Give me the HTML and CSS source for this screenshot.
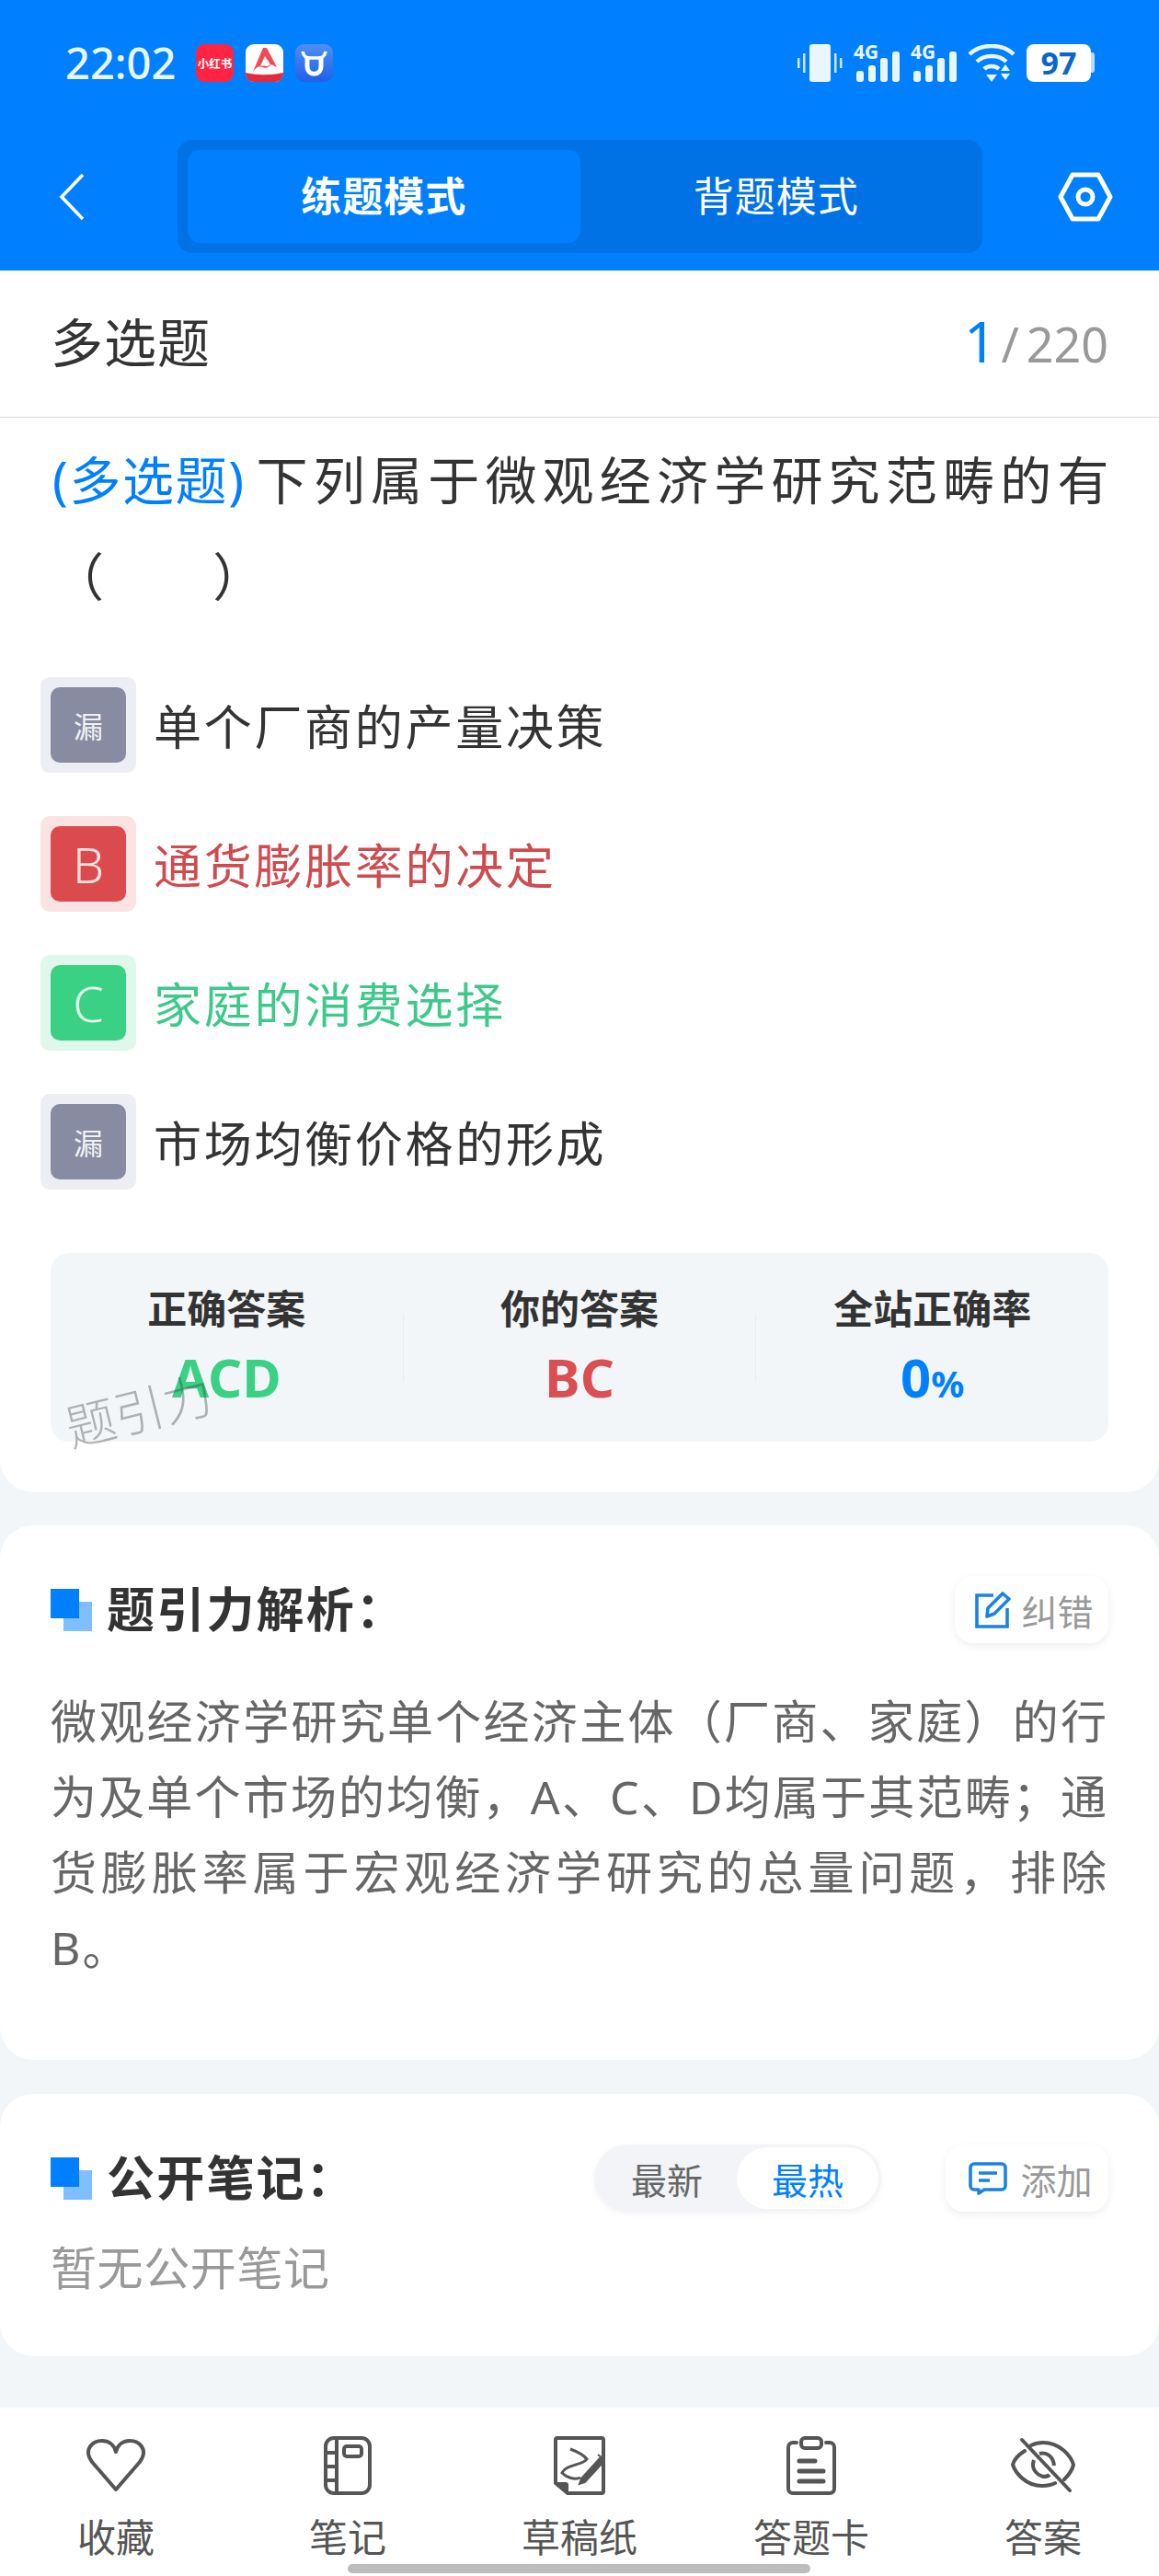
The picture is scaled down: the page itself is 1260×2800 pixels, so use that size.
FILE: index.html
```html
<!DOCTYPE html>
<html lang="zh-CN">
<head>
    <meta charset="UTF-8">
    <meta name="viewport" content="width=device-width, initial-scale=1.0">
    <title>练题模式</title>
    <link rel="stylesheet" href="styles.css">
</head>
<body>
<div class="page">
    <header class="top">
        <div class="status">
            <span class="time">22:02</span>
            <svg class="app" width="41" height="41" viewBox="0 0 41 41"><rect width="41" height="41" rx="9" fill="#ff2442"/><text x="20.5" y="26" font-size="12.5" font-weight="700" fill="#fff" text-anchor="middle">小红书</text></svg>
            <svg class="app" width="41" height="41" viewBox="0 0 41 41"><rect width="41" height="41" rx="9" fill="#fff"/><path d="M19 4h4l11 21-6-3c-3 3-6 5-10 3-4-2-7 1-10 5z" fill="#ef4a55"/><path d="M21 13l-5 11c3-1 6 0 8 0l3-2z" fill="#fff"/><path d="M0 31c14 3 27 3 41 0v1c0 5-4 9-9 9H9c-5 0-9-4-9-9z" fill="#e02c3c"/></svg>
            <svg class="app" width="41" height="41" viewBox="0 0 41 41"><defs><linearGradient id="blueApp" x1="0" y1="0" x2="0" y2="1"><stop offset="0" stop-color="#4d90f5"/><stop offset="1" stop-color="#1f60e8"/></linearGradient></defs><rect width="41" height="41" rx="9" fill="url(#blueApp)"/><path d="M13 13v11c0 11 15 11 15 0V13" fill="none" stroke="#fff" stroke-width="5"/><path d="M8 8c1 5 3 7 8 7h9c5 0 7-2 8-7" fill="none" stroke="#fff" stroke-width="3.5"/></svg>
            <div class="status-right">
                <svg width="49" height="41" viewBox="0 0 49 41"><rect x="13" width="23" height="41" rx="3" fill="#eaf6ff"/><rect x="6" y="10" width="2.5" height="21" fill="#cfe8ff"/><rect x="0" y="15" width="2.5" height="11" fill="#cfe8ff"/><rect x="40" y="10" width="2.5" height="21" fill="#cfe8ff"/><rect x="46" y="15" width="2.5" height="11" fill="#cfe8ff"/></svg>
                <svg width="50" height="41" viewBox="0 0 50 41" overflow="visible"><text x="0" y="16" font-size="22" font-weight="700" fill="#eaf6ff" textLength="27" lengthAdjust="spacingAndGlyphs">4G</text><rect x="3" y="29" width="8" height="12" rx="3" fill="#eaf6ff"/><rect x="16" y="23" width="8" height="18" rx="3" fill="#eaf6ff"/><rect x="29" y="15" width="8" height="26" rx="3" fill="#eaf6ff"/><rect x="42" y="8" width="8" height="33" rx="3" fill="#eaf6ff"/></svg>
                <svg width="50" height="41" viewBox="0 0 50 41" overflow="visible"><text x="0" y="16" font-size="22" font-weight="700" fill="#eaf6ff" textLength="27" lengthAdjust="spacingAndGlyphs">4G</text><rect x="3" y="29" width="8" height="12" rx="3" fill="#eaf6ff"/><rect x="16" y="23" width="8" height="18" rx="3" fill="#eaf6ff"/><rect x="29" y="15" width="8" height="26" rx="3" fill="#eaf6ff"/><rect x="42" y="8" width="8" height="33" rx="3" fill="#eaf6ff"/></svg>
                <svg width="52" height="41" viewBox="0 0 52 41"><path d="M2 11C14 -1 38 -1 50 11M10 19C18 11 34 11 42 19M18 27C22 23 30 23 34 27" fill="none" stroke="#eaf6ff" stroke-width="4.5"/><path d="M20 33h12l-6 8zM41 22l5 7H36zM36 32h10l-5 7z" fill="#eaf6ff"/></svg>
                <div class="battery"><span class="battery-num">97</span><span class="battery-cap"></span></div>
            </div>
        </div>
        <nav class="nav">
            <svg class="back" width="28" height="52" viewBox="0 0 28 52"><path d="M26 2L3 26l23 24" fill="none" stroke="#fff" stroke-width="3.6"/></svg>
            <div class="tabs">
                <div class="tab active">练题模式</div>
                <div class="tab">背题模式</div>
            </div>
            <svg class="gear" width="60" height="54" viewBox="0 0 60 54"><path d="M16 3h28l13 24-13 24H16L3 27z" fill="none" stroke="#fff" stroke-width="5" stroke-linejoin="round"/><circle cx="30" cy="27" r="8" fill="none" stroke="#fff" stroke-width="5"/></svg>
        </nav>
    </header>

    <section class="card question">
        <div class="q-head">
            <span class="q-type">多选题</span>
            <span class="q-count"><b>1</b><i>/</i>220</span>
        </div>
        <p class="q-text"><span class="q-tag">(多选题)</span>下列属于微观经济学研究范畴的有<br><span class="q-paren">（<span class="q-blank">　　</span>）</span></p>

        <ul class="options">
            <li class="option missed"><span class="opt-box"><span class="opt-key small">漏</span></span>单个厂商的产量决策</li>
            <li class="option wrong"><span class="opt-box"><span class="opt-key">B</span></span>通货膨胀率的决定</li>
            <li class="option right"><span class="opt-box"><span class="opt-key">C</span></span>家庭的消费选择</li>
            <li class="option missed"><span class="opt-box"><span class="opt-key small">漏</span></span>市场均衡价格的形成</li>
        </ul>

        <div class="stats">
            <div class="stat"><div class="stat-label">正确答案</div><div class="stat-value green">ACD</div></div>
            <span class="stat-line"></span>
            <div class="stat"><div class="stat-label">你的答案</div><div class="stat-value red">BC</div></div>
            <span class="stat-line"></span>
            <div class="stat"><div class="stat-label">全站正确率</div><div class="stat-value blue">0<small>%</small></div></div>
            <span class="watermark">题引力</span>
        </div>
    </section>

    <section class="card analysis">
        <div class="sec-head">
            <span class="squares"></span>
            <h2>题引力解析：</h2>
            <button class="mini-btn">
                <svg width="40" height="40" viewBox="0 0 40 40"><path d="M20 4H2v34h33V18" fill="none" stroke="#1a82e6" stroke-width="3.6"/><path d="M13 27l1-9L30 2l7 6-16 16z" fill="none" stroke="#1a82e6" stroke-width="3.6" stroke-linejoin="round"/></svg>
                纠错
            </button>
        </div>
        <p class="analysis-text">微观经济学研究单个经济主体（厂商、家庭）的行为及单个市场的均衡，A、C、D均属于其范畴；通货膨胀率属于宏观经济学研究的总量问题，排除B。</p>
    </section>

    <section class="card notes">
        <div class="sec-head">
            <span class="squares"></span>
            <h2>公开笔记：</h2>
            <div class="sort"><span>最新</span><span class="sort-on">最热</span></div>
            <button class="mini-btn add">
                <svg width="42" height="36" viewBox="0 0 42 36"><path d="M6 2h30a4 4 0 0 1 4 4v20a4 4 0 0 1-4 4H17l-6 4v-4H6a4 4 0 0 1-4-4V6a4 4 0 0 1 4-4z" fill="none" stroke="#1a82e6" stroke-width="3.6" stroke-linejoin="round"/><path d="M11 12h20M11 20h12" stroke="#1a82e6" stroke-width="3.6"/></svg>
                添加
            </button>
        </div>
        <p class="no-notes">暂无公开笔记</p>
    </section>

    <footer class="bottom">
        <div class="bar-item">
            <svg width="66" height="58" viewBox="0 0 66 58"><path d="M33 55L7 25C-3 11 8 2 18 2c7 0 13 4 15 12C35 6 41 2 48 2c10 0 21 9 11 23z" fill="none" stroke="#555" stroke-width="4" stroke-linejoin="round"/></svg>
            <span>收藏</span>
        </div>
        <div class="bar-item">
            <svg width="52" height="64" viewBox="0 0 52 64"><rect x="2" y="2" width="48" height="60" rx="9" fill="none" stroke="#555" stroke-width="4"/><path d="M14 2v60M2 18h12M2 33h12M2 48h12" stroke="#555" stroke-width="4"/><rect x="22" y="11" width="19" height="11" rx="3" fill="none" stroke="#555" stroke-width="4"/></svg>
            <span>笔记</span>
        </div>
        <div class="bar-item">
            <svg width="56" height="64" viewBox="0 0 56 64"><path d="M15 62H52a2 2 0 0 0 2-2V4a2 2 0 0 0-2-2H4a2 2 0 0 0-2 2v47z" fill="none" stroke="#555" stroke-width="4" stroke-linejoin="round"/><path d="M2 50h11a3 3 0 0 1 3 3v9z" fill="#555"/><path d="M18 14c8 3 15 7 18 11-5 7-22 5-27 15 5 5 14 8 20 5" fill="none" stroke="#555" stroke-width="3"/><path d="M30 46l-2 6 6-2 20-22-4-4zM48 20l5 4" fill="#555" stroke="#555" stroke-width="2"/></svg>
            <span>草稿纸</span>
        </div>
        <div class="bar-item">
            <svg width="56" height="64" viewBox="0 0 56 64"><path d="M12 7H8a5 5 0 0 0-5 5v45a5 5 0 0 0 5 5h40a5 5 0 0 0 5-5V12a5 5 0 0 0-5-5h-4" fill="none" stroke="#555" stroke-width="4" stroke-linecap="round"/><rect x="17" y="2" width="22" height="11" rx="4" fill="none" stroke="#555" stroke-width="4"/><path d="M15 27h17M15 38h26M15 49h26" stroke="#555" stroke-width="5" stroke-linecap="round"/></svg>
            <span>答题卡</span>
        </div>
        <div class="bar-item">
            <svg width="70" height="58" viewBox="0 0 70 58"><path d="M15 13C7 18 3 24 2 28c3 9 14 23 32 23 6 0 10-1 14-3M22 7c4-2 8-3 13-3 18 0 30 14 33 24-1 5-5 11-10 16" fill="none" stroke="#555" stroke-width="4" stroke-linecap="round"/><path d="M12 1l52 55" stroke="#555" stroke-width="4" stroke-linecap="round"/><path d="M25 23c-3 8 1 15 10 18 3 0 5 0 7-2M31 16c8-2 15 3 16 13" fill="none" stroke="#555" stroke-width="4"/></svg>
            <span>答案</span>
        </div>
        <div class="home-bar"></div>
    </footer>
</div>
</body>
</html>
```

FILE: styles.css
```css
* {
    box-sizing: border-box;
}
body {
    margin: 0;
    font-family: "Noto Sans", "Noto Sans CJK SC", sans-serif;
    color: #333;
}
.page {
    width: 1260px;
    height: 2800px;
    background-color: #f2f6f9;
    display: flex;
    flex-direction: column;
    overflow: hidden;
}

/* top */
.top {
    height: 294px;
    background-color: #0080ff;
}
.status {
    height: 136px;
    padding: 0 70px 0 71px;
    display: flex;
    align-items: center;
}
.time {
    font-size: 47px;
    font-weight: 500;
    color: #eaf6ff;
    margin-right: 22px;
}
.app {
    margin-right: 13px;
}
.status-right {
    margin-left: auto;
    display: flex;
    align-items: center;
    gap: 12px;
}
.battery {
    display: flex;
    align-items: center;
}
.battery-num {
    width: 70px;
    height: 41px;
    background-color: #fff;
    border-radius: 8px;
    text-align: center;
    font-size: 34px;
    line-height: 41px;
    font-weight: 700;
    color: #0a66c8;
}
.battery-cap {
    width: 4px;
    height: 22px;
    border-radius: 0 3px 3px 0;
    background-color: #bcdcff;
}
.nav {
    margin-top: 16px;
    height: 123px;
    display: grid;
    grid-template-columns: 193px 875px 1fr;
    align-items: center;
}
.back {
    margin-left: 64px;
}
.tabs {
    height: 123px;
    padding: 11px;
    background-color: #0072e5;
    border-radius: 16px;
    display: flex;
}
.tab {
    flex: 1;
    border-radius: 14px;
    padding-bottom: 5px;
    font-size: 44px;
    letter-spacing: 1px;
    color: #fff;
    display: flex;
    align-items: center;
    justify-content: center;
}
.tab.active {
    background-color: #0080ff;
    font-weight: 700;
}
.gear {
    justify-self: end;
    margin-right: 50px;
}

/* cards */
.card {
    background-color: #fff;
    border-radius: 36px;
}
.question {
    height: 1328px;
    border-radius: 0 0 36px 36px;
    padding-bottom: 54px;
}
.q-head {
    height: 160px;
    padding: 0 55px 8px 55px;
    border-bottom: 1px solid #d9d9d9;
    display: flex;
    align-items: center;
    justify-content: space-between;
}
.q-type {
    font-size: 57px;
    letter-spacing: 1px;
}
.q-count {
    font-size: 52px;
    color: #999;
}
.q-count b {
    font-size: 62px;
    font-weight: 400;
    color: #0080ff;
}
.q-count i {
    font-style: normal;
    margin: 0 8px 0 5px;
}
.q-text {
    margin: 16px 0 0;
    padding: 0 40px 0 57px;
    font-size: 56px;
    line-height: 103px;
    letter-spacing: 6.2px;
}
.q-tag {
    color: #0080ff;
    letter-spacing: 1.6px;
    margin-right: 12px;
}
.q-paren {
    display: block;
    margin-top: 2px;
}
.q-blank {
    letter-spacing: 0;
}
.options {
    list-style: none;
    margin: 34px 0 0;
    padding: 0 0 0 44px;
}
.option {
    height: 151px;
    display: flex;
    align-items: center;
    font-size: 52px;
    letter-spacing: 2.7px;
}
.opt-box {
    width: 104px;
    height: 104px;
    margin-right: 19px;
    padding: 11px;
    border-radius: 10px;
}
.opt-key {
    display: flex;
    width: 82px;
    height: 82px;
    border-radius: 10px;
    align-items: center;
    justify-content: center;
    font-size: 54px;
    font-weight: 300;
    letter-spacing: 0;
}
.opt-key.small {
    font-size: 32px;
    font-weight: 400;
}
.missed .opt-box {
    background-color: #eceef3;
}
.missed .opt-key {
    background-color: #878ca2;
    color: #f1f2f6;
}
.wrong {
    color: #cf4b4f;
}
.wrong .opt-box {
    background-color: #fbe3e3;
}
.wrong .opt-key {
    background-color: #db4b4d;
    color: #fbe3e3;
}
.right {
    color: #3dc98a;
}
.right .opt-box {
    background-color: #dff8eb;
}
.right .opt-key {
    background-color: #3ad184;
    color: #dff8eb;
}

/* stats */
.stats {
    position: relative;
    margin: 46px 55px 0;
    height: 205px;
    background-color: #f2f6f9;
    border-radius: 20px;
    display: flex;
}
.stat {
    flex: 1;
    padding-top: 31px;
    text-align: center;
}
.stat-label {
    font-size: 43px;
    line-height: 60px;
    font-weight: 700;
}
.stat-value {
    margin-top: 6px;
    font-size: 58px;
    line-height: 76px;
    font-weight: 700;
}
.stat-value small {
    font-size: 40px;
}
.stat-line {
    width: 1px;
    height: 74px;
    margin-top: 66px;
    background-color: #e8ebef;
}
.green {
    color: #3ad184;
}
.red {
    color: #d94f52;
}
.blue {
    color: #0080ff;
}
.watermark {
    position: absolute;
    left: 15px;
    top: 139px;
    font-size: 54px;
    line-height: 64px;
    color: rgba(60, 60, 60, 0.38);
    transform: rotate(-14deg);
    font-weight: 300;
}

/* analysis + notes */
.analysis {
    height: 581px;
    margin-top: 36px;
    padding: 0 55px;
}
.notes {
    height: 285px;
    margin-top: 37px;
    padding: 0 55px;
}
.sec-head {
    display: flex;
    align-items: center;
    padding-top: 55px;
    height: 128px;
}
.sec-head h2 {
    margin: -6px 0 0;
    font-size: 52px;
    font-weight: 700;
    letter-spacing: 2.2px;
}
.squares {
    position: relative;
    width: 45px;
    height: 46px;
    margin-right: 16px;
    background: linear-gradient(#0080ff, #0080ff) 0 0 / 31px 32px no-repeat,
                linear-gradient(#80bfff, #80bfff) 14px 14px / 31px 32px no-repeat;
}
.mini-btn {
    margin-left: auto;
    width: 167px;
    height: 73px;
    padding: 0 0 0 6px;
    border: none;
    border-radius: 20px;
    background-color: #fff;
    box-shadow: 0 3px 10px rgba(0, 0, 0, 0.07);
    color: #999;
    font-family: inherit;
    font-size: 39px;
    display: flex;
    align-items: center;
    justify-content: center;
    gap: 10px;
}
.mini-btn.add {
    margin-left: 70px;
    width: 177px;
    padding-left: 8px;
    gap: 14px;
}
.analysis-text {
    margin: 44px 0 0;
    font-size: 50px;
    line-height: 82px;
    letter-spacing: 2px;
    color: #666;
    text-align: justify;
}
.sort {
    margin-left: auto;
    width: 312px;
    height: 73px;
    padding: 3px;
    border-radius: 37px;
    background-color: #f2f4f7;
    box-shadow: 0 2px 6px rgba(0, 0, 0, 0.05);
    display: flex;
    font-size: 39px;
    color: #666;
}
.sort span {
    flex: 1;
    border-radius: 34px;
    display: flex;
    align-items: center;
    justify-content: center;
}
.sort .sort-on {
    flex: none;
    width: 154px;
    background-color: #fff;
    color: #0080ff;
}
.no-notes {
    margin: 26px 0 0;
    font-size: 50px;
    line-height: 70px;
    letter-spacing: 0.6px;
    color: #999;
}

/* bottom bar */
.bottom {
    position: relative;
    margin-top: auto;
    height: 183px;
    background-color: #fff;
    display: flex;
}
.bar-item {
    flex: 1;
    height: 183px;
    padding-top: 30px;
    display: flex;
    flex-direction: column;
    align-items: center;
    color: #555;
    font-size: 42px;
}
.bar-item svg {
    height: 66px;
    flex: none;
}
.bar-item span {
    line-height: 60px;
    margin-top: 15px;
}
.home-bar {
    position: absolute;
    left: 378px;
    bottom: 3px;
    width: 503px;
    height: 10px;
    border-radius: 5px;
    background-color: #bdbdbd;
}
```
